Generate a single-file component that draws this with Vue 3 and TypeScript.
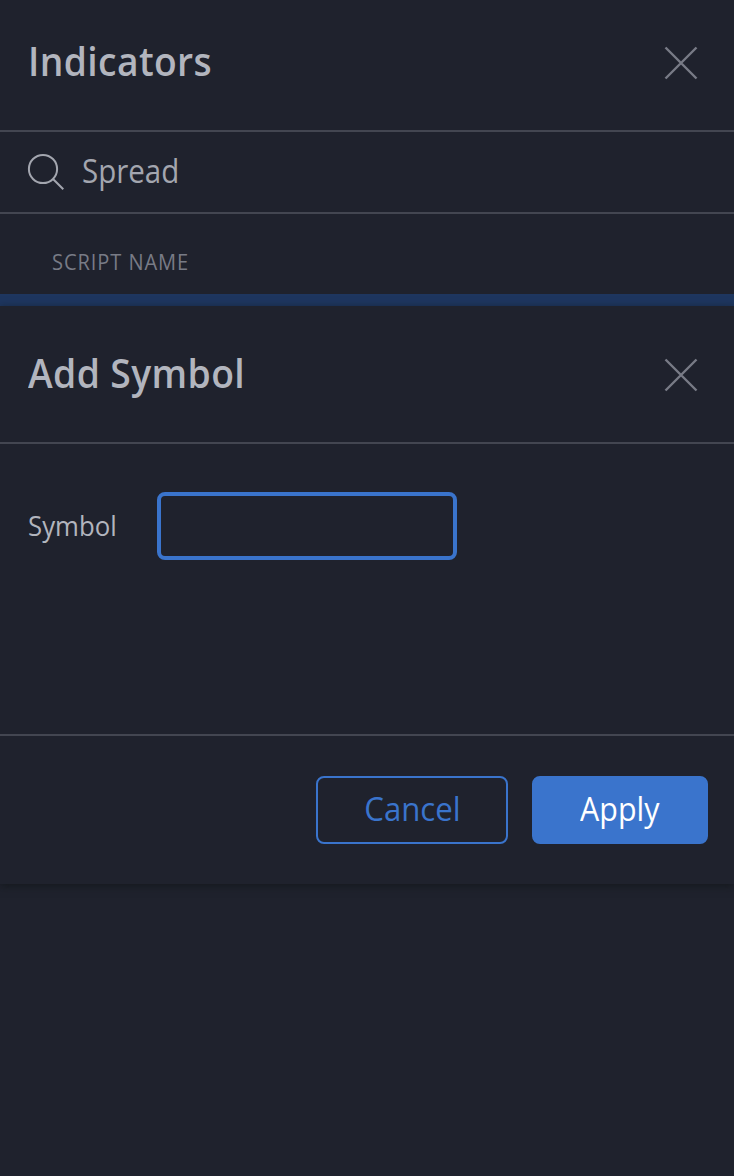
<script setup lang="ts">
import { ref } from 'vue'

const search = ref<string>('Spread')
const symbol = ref<string>('')
</script>

<template>
  <main class="page">
    <header class="header">
      <h1 class="title"><span class="narrow title-indicators">Indicators</span></h1>
      <button class="close" aria-label="Close indicators">
        <svg width="34" height="34" viewBox="0 0 34 34"><path d="M1.5 1.5 32.5 32.5M32.5 1.5 1.5 32.5" /></svg>
      </button>
    </header>
    <div class="search">
      <svg class="search-icon" width="38" height="38" viewBox="0 0 38 38">
        <circle cx="16" cy="16" r="14.1" />
        <path d="M26 26 36.3 36.3" />
      </svg>
      <span class="narrow query">{{ search }}</span>
    </div>
    <div class="columns"><span class="narrow column-name">SCRIPT NAME</span></div>
    <div class="selected-row"></div>
    <section class="dialog">
      <header class="header dialog-header">
        <h2 class="title"><span class="narrow title-add">Add Symbol</span></h2>
        <button class="close" aria-label="Close dialog">
          <svg width="34" height="34" viewBox="0 0 34 34"><path d="M1.5 1.5 32.5 32.5M32.5 1.5 1.5 32.5" /></svg>
        </button>
      </header>
      <div class="form">
        <label class="label" for="symbol"><span class="narrow label-text">Symbol</span></label>
        <input id="symbol" v-model="symbol" class="field" type="text" />
      </div>
      <footer class="footer">
        <button class="button cancel"><span class="narrow">Cancel</span></button>
        <button class="button apply"><span class="narrow">Apply</span></button>
      </footer>
    </section>
  </main>
</template>

<style>
body {
  margin: 0;
  background: #1f222d;
}
</style>

<style scoped>
* {
  box-sizing: border-box;
}
.page {
  min-height: 1176px;
  background: #1f222d;
  color: #b2b5be;
  font-family: "Open Sans", "Noto Sans", sans-serif;
}
.header {
  display: flex;
  justify-content: space-between;
  height: 132px;
  padding: 46px 36px 0 28px;
  border-bottom: 2px solid #434651;
}
.narrow {
  display: inline-block;
  transform-origin: left center;
}
.title {
  margin: 0;
  font-size: 40px;
  font-weight: 600;
  line-height: 30px;
  white-space: nowrap;
}
.title-indicators {
  letter-spacing: 0.4px;
  transform: scaleX(0.931);
}
.title-add {
  letter-spacing: 0.4px;
  transform: scaleX(0.933);
}
.close {
  width: 34px;
  height: 34px;
  padding: 0;
  border: 0;
  background: none;
}
.close svg {
  display: block;
  fill: none;
  stroke: #787b86;
  stroke-width: 2.4;
}
.search {
  display: flex;
  height: 82px;
  padding: 21px 28px 0 27px;
  border-bottom: 2px solid #434651;
}
.search-icon {
  flex: none;
  fill: none;
  stroke: #a3a6af;
  stroke-width: 2;
}
.query {
  margin-left: 17px;
  color: #a3a6af;
  font-size: 32px;
  line-height: 36px;
  transform: scaleX(0.922);
}
.columns {
  height: 80px;
  padding: 33px 52px 0;
  color: #787b86;
  font-size: 22px;
  line-height: 28px;
}
.column-name {
  letter-spacing: 1px;
  transform: scaleX(0.913);
}
.selected-row {
  height: 12px;
  background: #1e365f;
}
.dialog {
  height: 578px;
  background: #1f222d;
  box-shadow: 0 2px 8px rgba(14, 18, 18, 0.6);
}
.dialog-header {
  height: 138px;
  padding-top: 52px;
}
.form {
  display: flex;
  height: 290px;
  padding: 48px 28px 0;
}
.label {
  width: 129px;
  font-size: 28px;
  line-height: 66px;
}
.label-text {
  transform: scaleX(0.92);
}
.field {
  width: 300px;
  height: 68px;
  padding: 0 16px;
  border: 4px solid #3a74cc;
  border-radius: 8px;
  outline: none;
  background: transparent;
  color: #b2b5be;
  font: 28px "Open Sans", sans-serif;
}
.footer {
  display: flex;
  justify-content: flex-end;
  gap: 24px;
  height: 150px;
  padding: 40px 26px;
  border-top: 2px solid #434651;
}
.button {
  height: 68px;
  padding: 0 0 3px;
  border: 2px solid #3a74cc;
  border-radius: 8px;
  font: 32px/40px "Open Sans", "Noto Sans", sans-serif;
}
.button .narrow {
  transform: scaleX(0.95);
  transform-origin: center;
}
.button.cancel .narrow {
  transform: scaleX(0.975);
}
.cancel {
  width: 192px;
  background: transparent;
  color: #3a74cc;
}
.apply {
  width: 176px;
  background: #3a74cc;
  color: #fff;
}
</style>
